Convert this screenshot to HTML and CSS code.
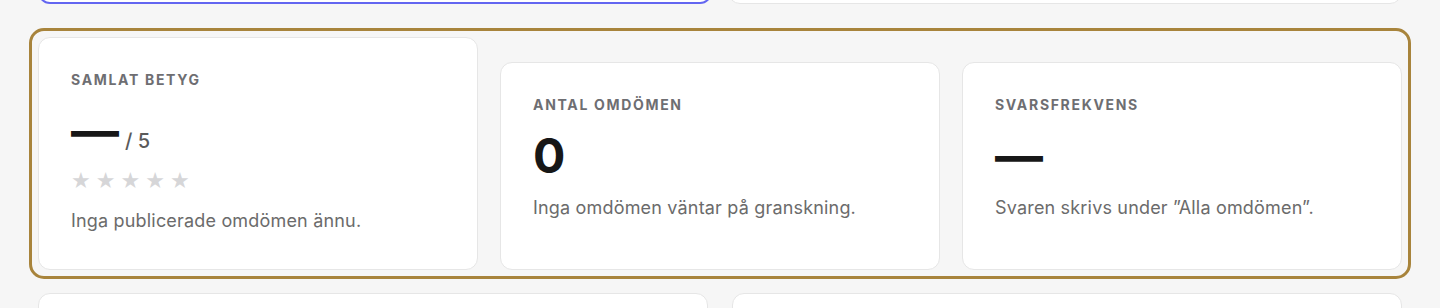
FILE: index.html
```html
<!DOCTYPE html>
<html lang="sv">
<head>
  <meta charset="UTF-8" />
  <meta name="viewport" content="width=device-width, initial-scale=1.0"/>
  <title>Omdömen</title>
  <link rel="stylesheet" href="styles.css">
</head>
<body>

<div class="page">
  <div class="row row-top">
    <div class="card stub selected"></div>
    <div class="card stub"></div>
  </div>

  <div class="stats highlight">
    <div class="card stat">
      <div class="stat-label">Samlat betyg</div>
      <div class="stat-value">—<span class="stat-suffix">/ 5</span></div>
      <div class="stars">
        <span>★</span><span>★</span><span>★</span><span>★</span><span>★</span>
      </div>
      <p class="stat-desc">Inga publicerade omdömen ännu.</p>
    </div>
    <div class="card stat">
      <div class="stat-label">Antal omdömen</div>
      <div class="stat-value">0</div>
      <p class="stat-desc">Inga omdömen väntar på granskning.</p>
    </div>
    <div class="card stat">
      <div class="stat-label">Svarsfrekvens</div>
      <div class="stat-value">—</div>
      <p class="stat-desc">Svaren skrivs under ”Alla omdömen”.</p>
    </div>
  </div>

  <div class="row row-bottom">
    <div class="card stub"></div>
    <div class="card stub"></div>
  </div>
</div>

</body>
</html>
```

FILE: styles.css
```css
body {
  font-family: Inter, "Noto Sans", sans-serif;
  background: #f6f6f6;
  margin: 0;
  padding: 0;
  color: #171717;
}
.page {
  padding: 0 38px;
}
.card {
  background: white;
  border: 1px solid #e6e6e6;
  border-radius: 12px;
  box-sizing: border-box;
}
.row {
  display: grid;
  grid-template-columns: 1fr 1fr;
}
.row-top {
  gap: 16px;
  margin-top: -60px;
}
.row-bottom {
  gap: 24px;
  margin-top: 23px;
}
.stub {
  height: 64px;
}
.selected {
  border: 2px solid #6366f1;
}

.stats {
  display: grid;
  grid-template-columns: repeat(3, 1fr);
  gap: 22px;
  align-items: end;
  margin-top: 33px;
}
.highlight {
  border-radius: 6px;
  outline: 3px solid #a8843c;
  outline-offset: 6px;
}
.stat {
  padding: 32px 32px 34px;
  min-height: 208px;
}
.stat-label {
  font-size: 14px;
  line-height: 20px;
  font-weight: 650;
  letter-spacing: 0.12em;
  text-transform: uppercase;
  color: #6e6e72;
}
.stat-value {
  font-size: 48px;
  line-height: 1;
  font-weight: 700;
  margin-top: 17px;
  color: #171717;
}
.stat-suffix {
  font-size: 20px;
  font-weight: 500;
  color: #5a5a5a;
  margin-left: 6px;
}
.stars {
  display: flex;
  gap: 5px;
  margin: 14px 0 6px;
  font-family: "DejaVu Sans", sans-serif;
  font-size: 22px;
  line-height: 24px;
  color: #d6d6d8;
}
.stat-desc {
  margin: 14px 0 0;
  font-size: 18px;
  letter-spacing: 0.01em;
  line-height: 28px;
  color: #6b6b6b;
}
```
